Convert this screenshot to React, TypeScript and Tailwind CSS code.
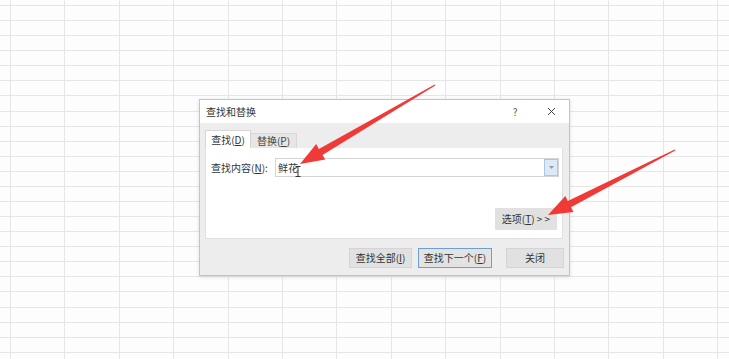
import React from 'react';

const COLS = 15;
const ROWS = 25;

type Pt = [number, number];

// builds a tapered arrow polygon going from tail to tip
const arrowPoints = (tail: Pt, tip: Pt, headLen = 24, headHalf = 9, shaftHalf = 3.5) => {
  const dx = tip[0] - tail[0];
  const dy = tip[1] - tail[1];
  const len = Math.hypot(dx, dy);
  const ux = dx / len;
  const uy = dy / len;
  const nx = uy;
  const ny = -ux;
  const bx = tip[0] - ux * headLen;
  const by = tip[1] - uy * headLen;
  const pts: Pt[] = [
    [tail[0] + nx * 0.6, tail[1] + ny * 0.6],
    [bx + nx * shaftHalf, by + ny * shaftHalf],
    [bx + nx * headHalf, by + ny * headHalf],
    tip,
    [bx - nx * headHalf, by - ny * headHalf],
    [bx - nx * shaftHalf, by - ny * shaftHalf],
    [tail[0] - nx * 0.6, tail[1] - ny * 0.6],
  ];
  return pts.map((p) => `${p[0].toFixed(1)},${p[1].toFixed(1)}`).join(' ');
};

const Key: React.FC<{ k: string }> = ({ k }) => <span className="underline underline-offset-1">{k}</span>;

export default function App() {
  return (
    <div
      className="relative w-[729px] h-[359px] overflow-hidden bg-[#fdfdfd] text-[#333]"
      style={{ fontFamily: '"Noto Sans CJK SC", "Noto Sans", sans-serif' }}
    >
      {/* sheet grid */}
      <div className="grid grid-cols-[11px_repeat(14,54.4px)] grid-rows-[6px_repeat(24,15.09px)]">
        {Array.from({ length: COLS * ROWS }).map((_, i) => (
          <div key={i} className="border-r border-b border-[#e6e6e6]" />
        ))}
      </div>

      {/* find & replace dialog */}
      <div className="absolute left-[199px] top-[99px] w-[371px] h-[177px] flex flex-col bg-[#ededed] border border-[#c4c4c4] shadow-[0_1px_4px_rgba(0,0,0,0.12)] text-[10px] leading-none">
        <div className="h-[23px] bg-white flex items-center pl-[6px]">
          <span className="flex-1">查找和替换</span>
          <span className="w-[10px] text-center mr-[27px] text-[#555]">?</span>
          <svg width="9" height="9" viewBox="0 0 9 9" className="mr-[13px]">
            <path d="M1 1 L8 8 M8 1 L1 8" stroke="#444" strokeWidth="1" />
          </svg>
        </div>

        <div className="flex-1 flex flex-col px-[5px] pt-[7px]">
          <div className="flex items-end h-[18px]">
            <div className="w-[46px] h-[18px] bg-white border border-b-0 border-[#d6d6d6] flex items-center justify-center">
              查找(<Key k="D" />)
            </div>
            <div className="w-[46px] h-[15px] bg-[#e6e6e6] border border-b-0 border-l-0 border-[#d9d9d9] flex items-center justify-center text-[#444]">
              替换(<Key k="P" />)
            </div>
          </div>

          <div className="w-[358px] h-[91px] bg-white border border-t-0 border-[#e0e0e0] flex flex-col pl-[5px] pt-[10px]">
            <div className="flex items-center h-[19px]">
              <span className="w-[64px]">
                查找内容(<Key k="N" />):
              </span>
              <div className="relative w-[284px] h-[19px] border border-[#d4d4d4] flex items-center pl-[2px]">
                <span className="flex-1">鲜花</span>
                <div className="w-[14px] h-[17px] bg-[#dde9f6] border border-[#aac7e8] flex items-center justify-center">
                  <svg width="5" height="3" viewBox="0 0 5 3">
                    <path d="M0 0 L2.5 3 L5 0 Z" fill="#8a9bb0" />
                  </svg>
                </div>
                {/* text cursor */}
                <svg width="6" height="11" viewBox="0 0 6 11" className="absolute left-[19px] top-[7px]">
                  <path d="M0.5 0.5 H5.5 M3 0.5 V10.5 M0.5 10.5 H5.5" stroke="#333" strokeWidth="1" fill="none" />
                </svg>
              </div>
            </div>
            <div className="flex justify-end pr-[5px] mt-[31px]">
              <div className="w-[62px] h-[22px] bg-[#e1e1e1] flex items-center justify-center">
                选项(<Key k="T" />)&nbsp;&gt; &gt;
              </div>
            </div>
          </div>

          <div className="flex justify-end items-center mt-[9px]">
            <div className="w-[63px] h-[20px] bg-[#e1e1e1] border border-[#d4d4d4] flex items-center justify-center">
              查找全部(<Key k="I" />)
            </div>
            <div className="w-[74px] h-[20px] ml-[6px] bg-[#e3e3e3] border border-[#6a9fd8] flex items-center justify-center">
              查找下一个(<Key k="F" />)
            </div>
            <div className="w-[58px] h-[20px] ml-[14px] bg-[#e1e1e1] border border-[#d4d4d4] flex items-center justify-center">
              关闭
            </div>
          </div>
        </div>
      </div>

      {/* annotation arrows */}
      <svg className="absolute inset-0 pointer-events-none" width="729" height="359">
        <polygon points={arrowPoints([435, 85], [300, 164])} fill="#f03a37" />
        <polygon points={arrowPoints([675, 150], [548, 215])} fill="#f03a37" />
      </svg>
    </div>
  );
}
